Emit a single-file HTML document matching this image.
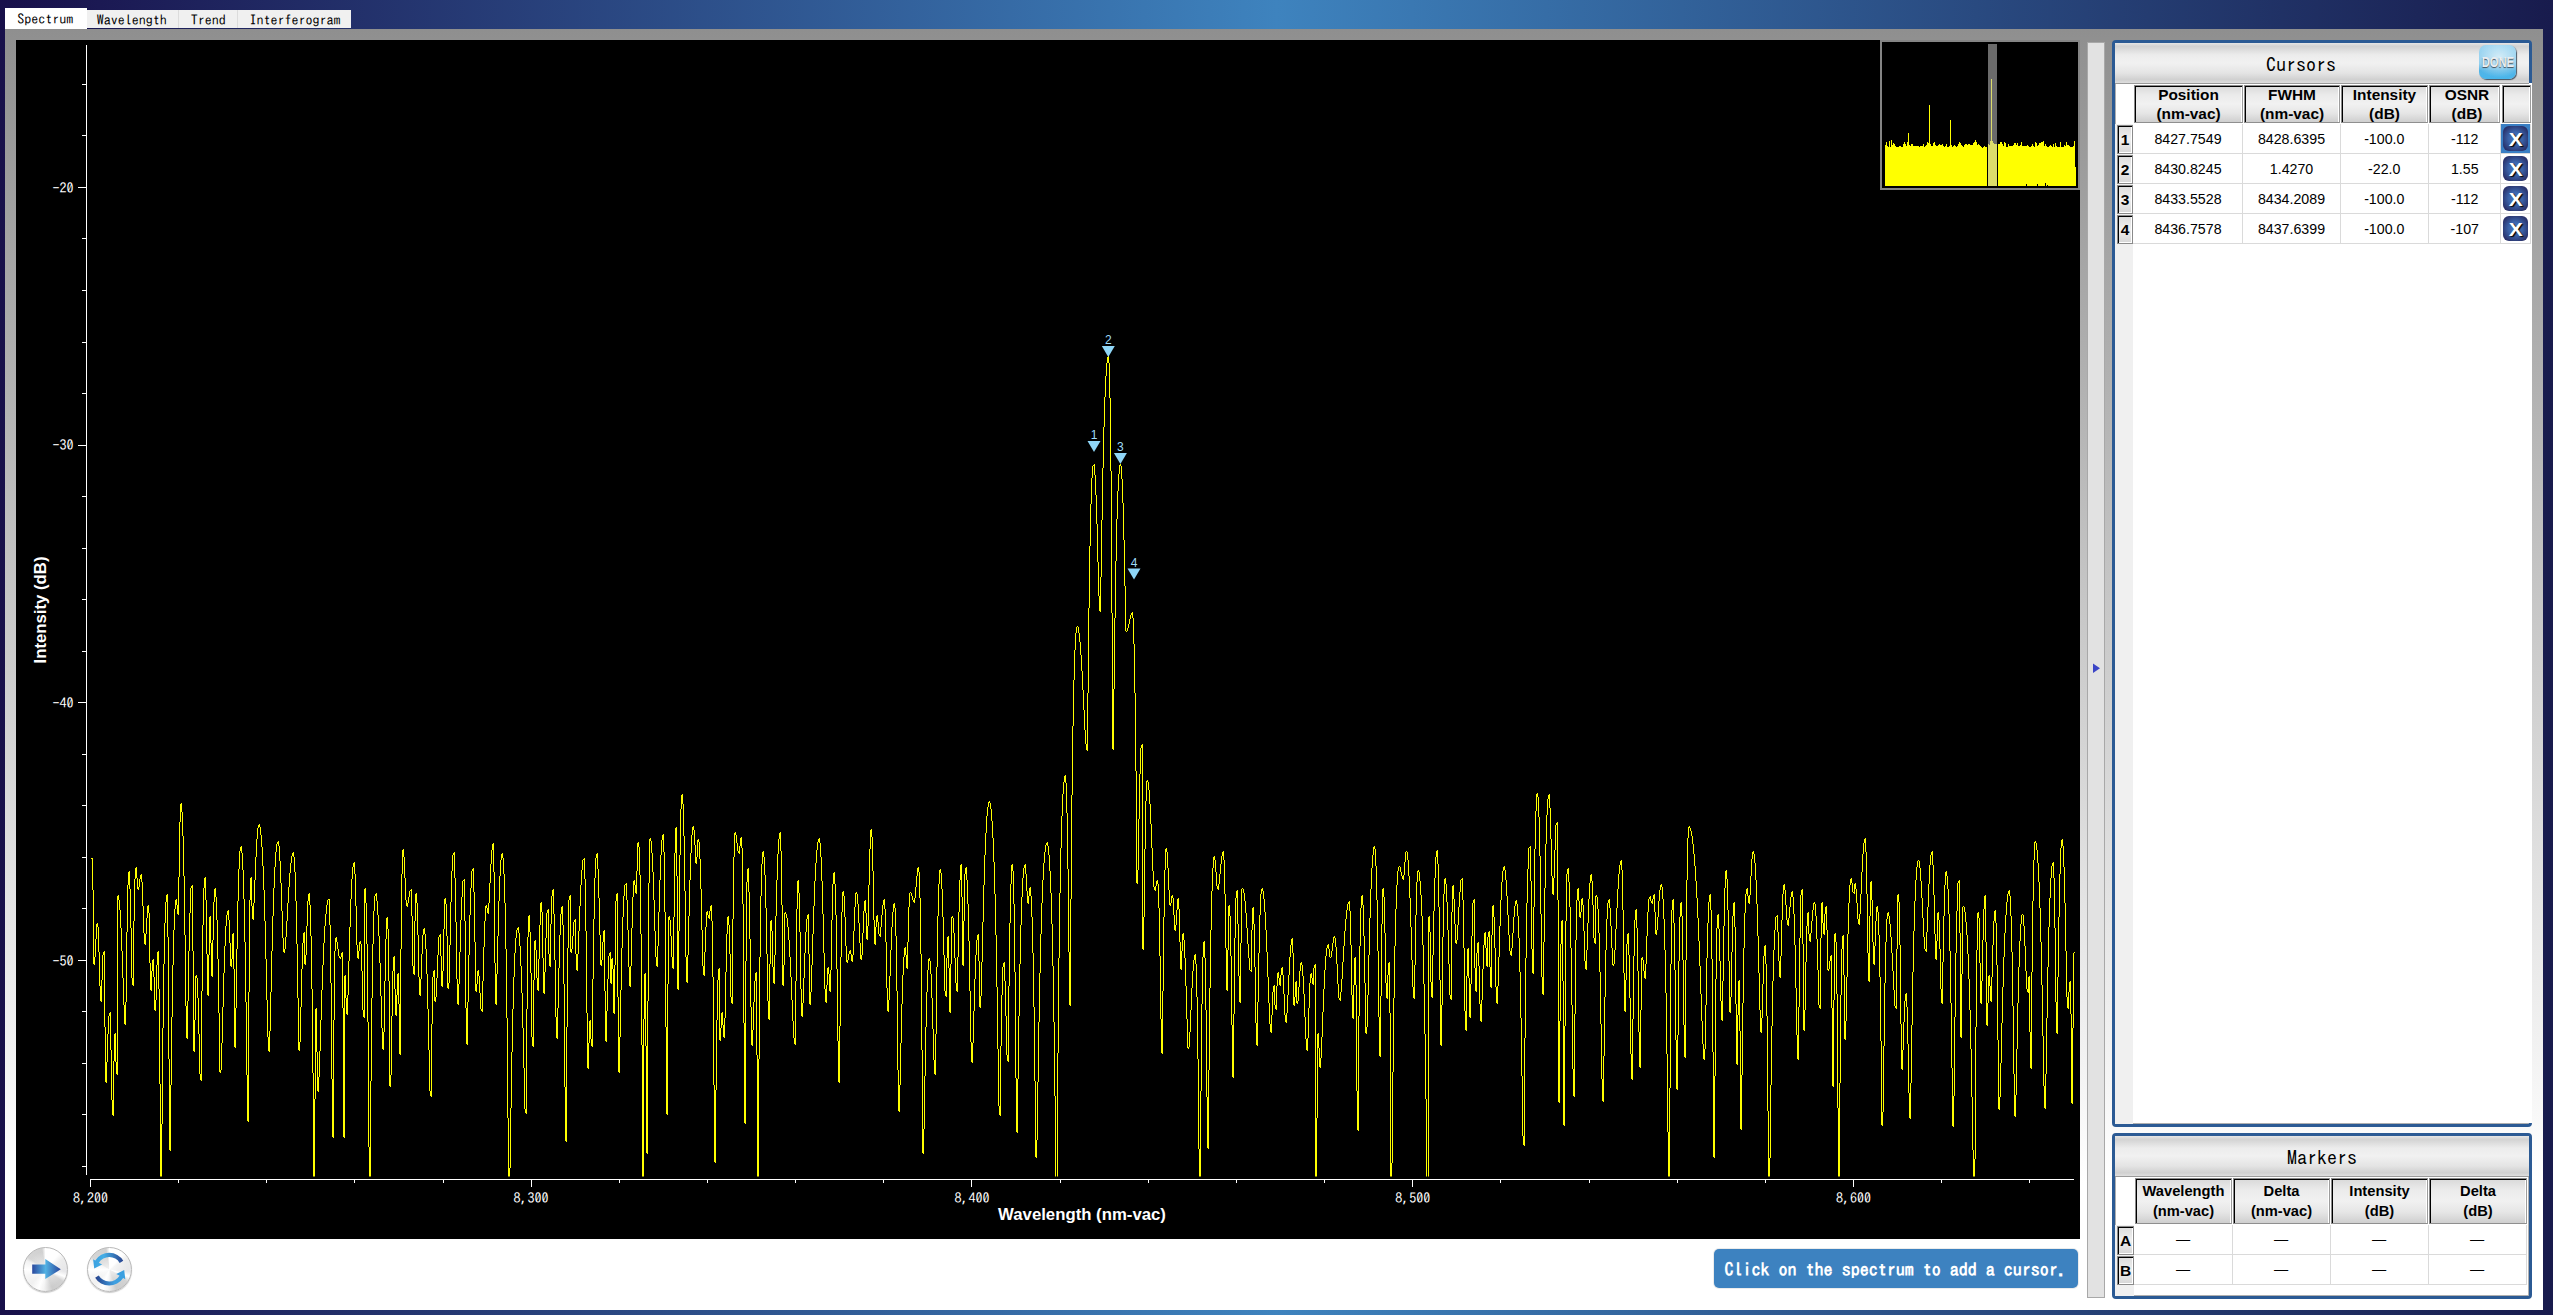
<!DOCTYPE html>
<html lang="en">
<head>
<meta charset="utf-8">
<title>Spectrum</title>
<style>
html,body{margin:0;padding:0}
body{width:2553px;height:1315px;overflow:hidden;position:relative;
  background:linear-gradient(to right,#18104a 0,#3e83be 50%,#181b4d 100%);
  font-family:"Liberation Sans",sans-serif;color:#000}
.abs{position:absolute}
.sim{font-family:"IPAGothic","Liberation Mono",monospace}
/* tabs */
.tab{position:absolute;top:10px;height:18px;background:#f0f0f0;font-size:14px;line-height:20.5px;text-align:center;text-indent:-1.5px;box-sizing:border-box;border-right:1px solid #dcdcdc}
.tab.act{top:8px;height:21px;background:#fff;line-height:23.5px;border-right:0}
/* frame */
#frame{left:5px;top:29px;width:2538px;height:1281px;background:linear-gradient(to bottom,#8f8f8f 0,#ffffff 1155px,#ffffff 100%)}
#plot{left:16px;top:40px;width:2064px;height:1199px;background:#000}
#plot svg{position:absolute;left:0;top:0}
#split{left:2087px;top:42px;width:18px;height:1256px;box-sizing:border-box;background:#e2e2e2;border:1px solid #a8a8a8}
/* panels */
.panel{position:absolute;left:2112px;width:420px;box-sizing:border-box;background:#fff;border:3px solid #2b5a94;border-radius:4px;box-shadow:inset 0 0 0 1px rgba(110,110,110,.55)}
.phead{position:absolute;left:0;top:0;height:40px;width:100%;
  background:linear-gradient(to bottom,#e6e6e6 0,#d2d2d2 8%,#ececec 30%,#f1f1f1 50%,#e4e4e4 75%,#d0d0d0 92%,#dedede 100%)}
.ptitle{position:absolute;font-size:20px;line-height:20px;white-space:nowrap}
.hc{position:absolute;box-sizing:border-box;border:1px solid #8a8a8a;border-right-color:#9c9c9c;border-bottom-color:#8f8f8f;
  box-shadow:inset 1px 1px 0 #000, inset -1px 0 0 #fff;
  background:linear-gradient(to bottom,#d9d9d9 0,#ebebeb 25%,#f1f1f1 50%,#e6e6e6 75%,#cfcfcf 100%);
  font-weight:bold;text-align:center;white-space:nowrap}
.rh{position:absolute;box-sizing:border-box;border:1px solid #8a8a8a;box-shadow:inset 1px 1px 0 #000, inset -1px -1px 0 #fff;
  background:linear-gradient(to bottom,#dcdcdc 0,#f0f0f0 50%,#d6d6d6 100%);font-weight:bold;font-size:15.5px;text-align:center}
.cell{position:absolute;text-align:center;font-size:14.2px;white-space:nowrap}
.gl{position:absolute;background:#dadada}
.xb{position:absolute;width:25px;height:25px;border-radius:6px;
  background:radial-gradient(ellipse at 50% 50%,#4a7cc2 0,#3a62a8 40%,#2a336c 80%,#2a2c60 100%);
  color:#fff;font-weight:bold;font-size:17.5px;line-height:28px;text-align:center;text-shadow:1px 1px 1px #000}
.xb span{display:inline-block;transform:scaleX(1.2)}

#done{left:2479px;top:45px;width:37px;height:34px;border-radius:7px;box-sizing:border-box;
  background:radial-gradient(ellipse 70% 60% at 55% 35%,#d3ecf7 0,rgba(211,236,247,0) 100%),linear-gradient(to bottom,#8fd0f0 0,#86c9ec 55%,#52b4e6 75%,#49b6ec 100%);
  box-shadow:1px 1px 1px rgba(20,40,60,.75);
  color:#e9edf0;font-weight:bold;font-size:14px;line-height:35px;text-align:center;letter-spacing:0;
  text-shadow:0 1px 1px rgba(60,70,80,.9)}
#done span{display:inline-block;transform:translateX(-1.4px) scaleX(.8);transform-origin:50% 50%}

.disc{position:absolute;width:45px;height:45px;border-radius:50%;box-sizing:border-box;border:1.5px solid #b9b9b9;
  background:radial-gradient(circle at 50% 50%,rgba(255,255,255,.75) 0,rgba(255,255,255,.3) 30%,rgba(255,255,255,0) 60%),
  conic-gradient(from 0deg,#ffffff 0deg,#ffffff 40deg,#ececec 60deg,#e6e6e8 95deg,#ffffff 110deg,#d2d2d2 125deg,#cccccc 160deg,#f4f4f4 185deg,#ffffff 200deg,#f0f0f0 225deg,#f6f6f6 250deg,#ffffff 270deg,#f2f2f2 295deg,#d6d6d6 305deg,#d0d0d0 350deg,#ffffff 360deg);
  box-shadow:0 1px 1px rgba(120,120,120,.4)}
#msg{left:1714px;top:1249px;width:364px;height:39px;box-sizing:border-box;background:#3d82c0;border-radius:5px;box-shadow:0 0 0 1px #ececec;
  color:#fff;font-weight:bold;font-size:18px;line-height:40px;padding-left:10.5px;white-space:nowrap;letter-spacing:0.01px}
</style>
</head>
<body>
<!-- tabs -->
<div class="tab act sim" style="left:5px;width:82px">Spectrum</div>
<div class="tab sim" style="left:87px;width:92px">Wavelength</div>
<div class="tab sim" style="left:179px;width:59px;text-indent:0.5px">Trend</div>
<div class="tab sim" style="left:238px;width:113px;border-right:0;text-indent:1px">Interferogram</div>

<div id="frame" class="abs"></div>

<div id="plot" class="abs">
<svg width="2064" height="1199" viewBox="16 40 2064 1199">
  <defs><clipPath id="cp"><rect x="88" y="41" width="1990" height="1135.5"/></clipPath></defs>
  <g shape-rendering="crispEdges" fill="none" stroke="#fff" stroke-width="1">
    <path d="M86.5 45V1175"/>
    <path d="M82 84.5H87M82 135.5H87M78 187.5H87M82 238.5H87M82 290.5H87M82 342.5H87M82 393.5H87M78 445.5H87M82 496.5H87M82 548.5H87M82 599.5H87M82 651.5H87M78 702.5H87M82 754.5H87M82 805.5H87M82 857.5H87M82 908.5H87M78 960.5H87M82 1011.5H87M82 1063.5H87M82 1114.5H87M82 1166.5H87"/>
    <path d="M90 1179.5H2074"/>
    <path d="M90.4 1179V1187M178.6 1179V1183M266.7 1179V1183M354.9 1179V1183M443.0 1179V1183M531.1 1179V1187M619.3 1179V1183M707.5 1179V1183M795.6 1179V1183M883.8 1179V1183M971.9 1179V1187M1060.1 1179V1183M1148.2 1179V1183M1236.4 1179V1183M1324.5 1179V1183M1412.7 1179V1187M1500.8 1179V1183M1589.0 1179V1183M1677.1 1179V1183M1765.3 1179V1183M1853.4 1179V1187M1941.6 1179V1183M2029.7 1179V1183"/>
  </g>
  <g class="sim" font-family="IPAGothic,'Liberation Mono',monospace" font-size="14" fill="#fff"><text x="73.5" y="192.8" text-anchor="end">-20</text><text x="73.5" y="450.4" text-anchor="end">-30</text><text x="73.5" y="708.1" text-anchor="end">-40</text><text x="73.5" y="965.7" text-anchor="end">-50</text><text x="90.4" y="1202.5" text-anchor="middle">8,200</text><text x="531.1" y="1202.5" text-anchor="middle">8,300</text><text x="971.9" y="1202.5" text-anchor="middle">8,400</text><text x="1412.7" y="1202.5" text-anchor="middle">8,500</text><text x="1853.4" y="1202.5" text-anchor="middle">8,600</text></g>
  <text x="1082" y="1219.6" text-anchor="middle" font-family="'Liberation Sans',sans-serif" font-weight="bold" font-size="16.75" fill="#fff">Wavelength (nm-vac)</text>
  <text transform="translate(45.5 610) rotate(-90)" text-anchor="middle" font-family="'Liberation Sans',sans-serif" font-weight="bold" font-size="16.75" fill="#fff">Intensity (dB)</text>
  <path clip-path="url(#cp)" shape-rendering="crispEdges" fill="none" stroke="#ffff00" stroke-width="1" d="M91.5 858v1M92.5 858V890M93.5 890V964M94.5 965V957M95.5 957V939M96.5 939V924M97.5 923V927M98.5 927V952M99.5 952V986M100.5 986V1001M101.5 1002V980M102.5 980V955M103.5 955V952M104.5 951V1027M105.5 1027V1082M106.5 1083V1062M107.5 1062V1034M108.5 1034V1016M109.5 1016V1013M110.5 1012V1050M111.5 1050V1100M112.5 1100V1115M113.5 1116V1061M114.5 1061V1034M115.5 1033V1062M116.5 1062V1074M117.5 1075V896M118.5 895V900M119.5 900V910M120.5 910V928M121.5 928V951M122.5 951V978M123.5 978V1005M124.5 1005V1024M125.5 1025V1002M126.5 1002V932M127.5 932V885M128.5 885V872M129.5 871V889M130.5 889V928M131.5 928V978M132.5 978V985M133.5 986V921M134.5 921V879M135.5 879V868M136.5 867V878M137.5 878V889M138.5 890V887M139.5 887V879M140.5 879V875M141.5 874V882M142.5 882V906M143.5 906V933M144.5 933V944M145.5 945V934M146.5 934V918M147.5 918V906M148.5 905V913M149.5 913V963M150.5 963V990M151.5 991V971M152.5 971V960M153.5 959V977M154.5 977V1010M155.5 1011V1000M156.5 1000V965M157.5 965V952M158.5 951V989M159.5 989V1084M160.5 1084V1177M161.5 1178V1124M162.5 1124V1028M163.5 1028V964M164.5 964V923M165.5 923V902M166.5 902V895M167.5 894V937M168.5 937V1059M169.5 1059V1150M170.5 1151V1085M171.5 1085V1017M172.5 1017V965M173.5 965V930M174.5 930V909M175.5 909V900M176.5 899V905M177.5 905V914M178.5 915V877M179.5 877V822M180.5 822V804M181.5 803V812M182.5 812V836M183.5 836V876M184.5 876V935M185.5 935V1006M186.5 1006V1038M187.5 1039V1001M188.5 1001V951M189.5 951V913M190.5 913V888M191.5 888V886M192.5 885V951M193.5 951V1051M194.5 1052V1020M195.5 1020V976M196.5 975V978M197.5 978V998M198.5 998V1034M199.5 1034V1074M200.5 1074V1080M201.5 1081V991M202.5 991V925M203.5 925V888M204.5 888V878M205.5 877V900M206.5 900V954M207.5 954V995M208.5 996V955M209.5 955V917M210.5 916V943M211.5 943V976M212.5 977V940M213.5 940V902M214.5 902V889M215.5 888V897M216.5 897V920M217.5 920V959M218.5 959V1013M219.5 1013V1072M220.5 1073V1070M221.5 1070V1043M222.5 1043V1007M223.5 1007V973M224.5 973V946M225.5 946V926M226.5 926V915M227.5 915V911M228.5 910V920M229.5 920V943M230.5 943V966M231.5 967V959M232.5 959V934M233.5 933V969M234.5 969V1047M235.5 1048V1008M236.5 1008V949M237.5 949V901M238.5 901V869M239.5 869V851M240.5 851V847M241.5 846V853M242.5 853V870M243.5 870V899M244.5 899V942M245.5 942V1002M246.5 1002V1075M247.5 1075V1121M248.5 1122V992M249.5 992V900M250.5 900V878M251.5 877V906M252.5 906V919M253.5 920V903M254.5 903V880M255.5 880V857M256.5 857V839M257.5 839V828M258.5 828V825M259.5 824V827M260.5 827V835M261.5 835V847M262.5 847V866M263.5 866V890M264.5 890V921M265.5 921V959M266.5 959V1000M267.5 1000V1037M268.5 1037V1051M269.5 1052V1031M270.5 1031V992M271.5 992V951M272.5 951V916M273.5 916V888M274.5 888V867M275.5 867V852M276.5 852V844M277.5 844V842M278.5 841V846M279.5 846V861M280.5 861V883M281.5 883V911M282.5 911V938M283.5 938V952M284.5 953V949M285.5 949V937M286.5 937V921M287.5 921V903M288.5 903V887M289.5 887V873M290.5 873V863M291.5 863V856M292.5 856V853M293.5 852V857M294.5 857V872M295.5 872V901M296.5 901V944M297.5 944V998M298.5 998V1050M299.5 1051V1042M300.5 1042V1007M301.5 1007V969M302.5 969V943M303.5 943V933M304.5 932V964M305.5 965V955M306.5 955V926M307.5 926V901M308.5 901V894M309.5 893V905M310.5 905V936M311.5 936V989M312.5 989V1073M313.5 1073V1177M314.5 1178V1099M315.5 1099V1009M316.5 1008V1052M317.5 1052V1091M318.5 1092V1077M319.5 1077V1051M320.5 1051V1020M321.5 1020V990M322.5 990V965M323.5 965V943M324.5 943V926M325.5 926V914M326.5 914V905M327.5 905V900M328.5 899v1M329.5 899V925M330.5 925V983M331.5 983V1079M332.5 1079V1137M333.5 1138V1020M334.5 1020V951M335.5 951V938M336.5 937V942M337.5 942V949M338.5 949V956M339.5 956V958M340.5 959V957M341.5 957V953M342.5 952V1008M343.5 1008V1137M344.5 1138V976M345.5 975V998M346.5 998V1014M347.5 1015V995M348.5 995V961M349.5 961V927M350.5 927V899M351.5 899V879M352.5 879V867M353.5 867V863M354.5 862V874M355.5 874V906M356.5 906V945M357.5 945V958M358.5 959V951M359.5 951V942M360.5 941V944M361.5 944V971M362.5 971V1010M363.5 1010V1017M364.5 1018V889M365.5 888V903M366.5 903V944M367.5 944V1022M368.5 1022V1147M369.5 1147V1177M370.5 1178V1081M371.5 1081V998M372.5 998V944M373.5 944V911M374.5 911V896M375.5 896V894M376.5 893V901M377.5 901V915M378.5 915V936M379.5 936V963M380.5 963V996M381.5 996V1028M382.5 1028V1049M383.5 1050V1032M384.5 1032V981M385.5 981V939M386.5 939V918M387.5 917V929M388.5 929V981M389.5 981V1086M390.5 1087V1075M391.5 1075V1016M392.5 1016V971M393.5 971V957M394.5 956V989M395.5 989V1015M396.5 1016V995M397.5 995V974M398.5 973V1004M399.5 1004V1054M400.5 1055V949M401.5 949V874M402.5 874V850M403.5 849V857M404.5 857V878M405.5 878V900M406.5 900V906M407.5 907V903M408.5 903V897M409.5 897V891M410.5 891V890M411.5 889V916M412.5 916V966M413.5 966V974M414.5 975V921M415.5 921V894M416.5 893V903M417.5 903V935M418.5 935V977M419.5 977V995M420.5 996V979M421.5 979V954M422.5 954V935M423.5 935V929M424.5 928V934M425.5 934V949M426.5 949V974M427.5 974V1009M428.5 1009V1050M429.5 1050V1091M430.5 1091V1096M431.5 1097V1024M432.5 1024V977M433.5 977V971M434.5 970V1001M435.5 1002V997M436.5 997V978M437.5 978V955M438.5 955V937M439.5 937V935M440.5 934V956M441.5 956V986M442.5 987V971M443.5 971V929M444.5 929V899M445.5 898V904M446.5 904V936M447.5 936V988M448.5 989V983M449.5 983V945M450.5 945V902M451.5 902V871M452.5 871V855M453.5 855V853M454.5 852V878M455.5 878V922M456.5 922V979M457.5 979V1004M458.5 1005V984M459.5 984V952M460.5 952V920M461.5 920V897M462.5 897V881M463.5 881V880M464.5 879V921M465.5 921V1008M466.5 1008V1044M467.5 1045V1002M468.5 1002V955M469.5 955V915M470.5 915V888M471.5 888V871M472.5 871V869M473.5 868V892M474.5 892V942M475.5 942V991M476.5 992V984M477.5 984V971M478.5 970V976M479.5 976V993M480.5 993V1009M481.5 1009V1011M482.5 1012V981M483.5 981V947M484.5 947V921M485.5 921V906M486.5 905V908M487.5 908V913M488.5 914V903M489.5 903V883M490.5 883V864M491.5 864V850M492.5 850V844M493.5 843V872M494.5 872V963M495.5 963V1004M496.5 1005V974M497.5 974V936M498.5 936V901M499.5 901V876M500.5 876V860M501.5 860V854M502.5 853V858M503.5 858V874M504.5 874V903M505.5 903V949M506.5 949V1018M507.5 1018V1118M508.5 1118V1177M509.5 1178V1168M510.5 1168V1108M511.5 1108V1052M512.5 1052V1009M513.5 1009V977M514.5 977V953M515.5 953V938M516.5 938V930M517.5 930V928M518.5 927V933M519.5 933V946M520.5 946V966M521.5 966V993M522.5 993V1028M523.5 1028V1068M524.5 1068V1109M525.5 1109V1113M526.5 1114V1009M527.5 1009V937M528.5 937V916M529.5 915V932M530.5 932V973M531.5 973V1037M532.5 1037V1046M533.5 1047V980M534.5 980V941M535.5 940V950M536.5 950V978M537.5 978V990M538.5 991V959M539.5 959V925M540.5 925V903M541.5 902V912M542.5 912V958M543.5 958V993M544.5 994V972M545.5 972V938M546.5 938V913M547.5 913V910M548.5 909V954M549.5 954V966M550.5 967V924M551.5 924V896M552.5 896V890M553.5 889V914M554.5 914V960M555.5 960V1017M556.5 1017V1038M557.5 1039V1008M558.5 1008V968M559.5 968V935M560.5 935V914M561.5 914V907M562.5 906V925M563.5 925V984M564.5 984V1087M565.5 1087V1141M566.5 1142V1027M567.5 1027V948M568.5 948V900M569.5 900V896M570.5 895V952M571.5 953V949M572.5 949V936M573.5 936V922M574.5 922V920M575.5 919V954M576.5 954V970M577.5 971V954M578.5 954V931M579.5 931V906M580.5 906V885M581.5 885V870M582.5 870V860M583.5 860V859M584.5 858V879M585.5 879V931M586.5 931V1013M587.5 1013V1068M588.5 1069V1043M589.5 1043V1021M590.5 1020V1039M591.5 1039V1046M592.5 1047V979M593.5 979V919M594.5 919V878M595.5 878V858M596.5 858V854M597.5 853V869M598.5 869V898M599.5 898V935M600.5 935V965M601.5 966V960M602.5 960V942M603.5 942V931M604.5 930V991M605.5 991V1041M606.5 1042V1011M607.5 1011V979M608.5 979V956M609.5 956V953M610.5 952V983M611.5 984V959M612.5 958V969M613.5 969V1013M614.5 1014V965M615.5 965V901M616.5 901V894M617.5 893V997M618.5 997V1072M619.5 1073V1037M620.5 1037V990M621.5 990V948M622.5 948V917M623.5 917V896M624.5 896V885M625.5 885V884M626.5 883V900M627.5 900V930M628.5 930V967M629.5 967V986M630.5 987V966M631.5 966V928M632.5 928V897M633.5 897V881M634.5 880V885M635.5 885V893M636.5 894V871M637.5 871V843M638.5 842V847M639.5 847V875M640.5 875V934M641.5 934V1045M642.5 1045V1177M643.5 1178V1019M644.5 1019V974M645.5 973V1046M646.5 1046V1153M647.5 1154V1001M648.5 1001V883M649.5 883V839M650.5 838V841M651.5 841V853M652.5 853V872M653.5 872V900M654.5 900V931M655.5 931V957M656.5 957V966M657.5 967V946M658.5 946V912M659.5 912V880M660.5 880V855M661.5 855V840M662.5 840V835M663.5 834V852M664.5 852V912M665.5 912V1027M666.5 1027V1114M667.5 1115V984M668.5 984V917M669.5 916V920M670.5 920V936M671.5 936V957M672.5 957V968M673.5 969V917M674.5 917V853M675.5 853V828M676.5 827V876M677.5 876V989M678.5 990V931M679.5 931V855M680.5 855V809M681.5 809V795M682.5 794V804M683.5 804V836M684.5 836V891M685.5 891V957M686.5 957V982M687.5 983V955M688.5 955V916M689.5 916V880M690.5 880V853M691.5 853V835M692.5 835V827M693.5 826V830M694.5 830V845M695.5 845V863M696.5 864V857M697.5 857V840M698.5 839V842M699.5 842V859M700.5 859V889M701.5 889V930M702.5 930V966M703.5 966V975M704.5 976V952M705.5 952V927M706.5 927V912M707.5 911V915M708.5 915V918M709.5 919V911M710.5 911V906M711.5 905V921M712.5 921V977M713.5 977V1085M714.5 1085V1162M715.5 1163V1090M716.5 1090V1020M717.5 1020V980M718.5 980V969M719.5 968V1040M720.5 1041V1028M721.5 1028V1013M722.5 1012V1025M723.5 1025V1037M724.5 1038V1018M725.5 1018V972M726.5 972V934M727.5 934V917M728.5 916V925M729.5 925V954M730.5 954V997M731.5 997V1003M732.5 1004V919M733.5 919V857M734.5 857V833M735.5 832V835M736.5 835V843M737.5 843V851M738.5 851V853M739.5 854V846M740.5 846V838M741.5 837V848M742.5 848V904M743.5 904V1023M744.5 1023V1123M745.5 1124V961M746.5 961V882M747.5 882V869M748.5 868V892M749.5 892V939M750.5 939V1007M751.5 1007V1045M752.5 1046V1030M753.5 1030V1002M754.5 1002V981M755.5 981V973M756.5 972V1055M757.5 1055V1177M758.5 1178V1059M759.5 1059V957M760.5 957V896M761.5 896V864M762.5 864V852M763.5 851V857M764.5 857V875M765.5 875V908M766.5 908V954M767.5 954V1001M768.5 1001V1019M769.5 1020V964M770.5 964V921M771.5 920V931M772.5 931V967M773.5 967V983M774.5 984V955M775.5 955V916M776.5 916V880M777.5 880V854M778.5 854V839M779.5 839V833M780.5 832V851M781.5 851V905M782.5 905V985M783.5 986V965M784.5 965V913M785.5 912V914M786.5 914V918M787.5 918V927M788.5 927V940M789.5 940V957M790.5 957V977M791.5 977V1000M792.5 1000V1021M793.5 1021V1038M794.5 1038V1044M795.5 1045V981M796.5 981V909M797.5 909V881M798.5 880V893M799.5 893V932M800.5 932V989M801.5 989V1016M802.5 1017V1003M803.5 1003V978M804.5 978V953M805.5 953V932M806.5 932V919M807.5 919V915M808.5 914V954M809.5 954V1004M810.5 1005V992M811.5 992V965M812.5 965V934M813.5 934V906M814.5 906V881M815.5 881V863M816.5 863V850M817.5 850V842M818.5 842V839M819.5 838V843M820.5 843V857M821.5 857V881M822.5 881V914M823.5 914V953M824.5 953V989M825.5 989V1002M826.5 1003V985M827.5 985V968M828.5 967V974M829.5 974V991M830.5 992V970M831.5 970V920M832.5 920V884M833.5 884V873M834.5 872V884M835.5 884V915M836.5 915V969M837.5 969V1041M838.5 1041V1082M839.5 1083V1026M840.5 1026V957M841.5 957V912M842.5 912V892M843.5 891V896M844.5 896V917M845.5 917V946M846.5 946V962M847.5 963V960M848.5 960V954M849.5 954V951M850.5 950V954M851.5 954V961M852.5 962V955M853.5 955V931M854.5 931V907M855.5 907V893M856.5 892V894M857.5 894V904M858.5 904V923M859.5 923V943M860.5 943V959M861.5 960V955M862.5 955V933M863.5 933V911M864.5 911V901M865.5 900V913M866.5 913V939M867.5 940V926M868.5 926V885M869.5 885V849M870.5 849V830M871.5 829V837M872.5 837V871M873.5 871V920M874.5 920V944M875.5 945V927M876.5 927V916M877.5 915V922M878.5 922V934M879.5 934V936M880.5 937V927M881.5 927V915M882.5 915V905M883.5 905V900M884.5 899V909M885.5 909V942M886.5 942V988M887.5 988V1011M888.5 1012V1000M889.5 1000V976M890.5 976V950M891.5 950V927M892.5 927V912M893.5 912V904M894.5 903V908M895.5 908V936M896.5 936V991M897.5 991V1070M898.5 1070V1111M899.5 1112V1085M900.5 1085V1043M901.5 1043V1004M902.5 1004V975M903.5 975V957M904.5 957V948M905.5 947V955M906.5 955V968M907.5 969V942M908.5 942V907M909.5 907V893M910.5 892V893M911.5 893V896M912.5 896V900M913.5 900V902M914.5 903V898M915.5 898V887M916.5 887V876M917.5 876V868M918.5 867V872M919.5 872V898M920.5 898V954M921.5 954V1050M922.5 1050V1153M923.5 1154V1129M924.5 1129V1076M925.5 1076V1027M926.5 1027V992M927.5 992V970M928.5 970V959M929.5 958V961M930.5 961V974M931.5 974V998M932.5 998V1029M933.5 1029V1060M934.5 1060V1074M935.5 1075V1034M936.5 1034V967M937.5 967V916M938.5 916V884M939.5 884V870M940.5 869V873M941.5 873V889M942.5 889V917M943.5 917V955M944.5 955V991M945.5 991V996M946.5 997V958M947.5 958V937M948.5 936V968M949.5 968V1012M950.5 1013V964M951.5 964V917M952.5 916V918M953.5 918V933M954.5 933V958M955.5 958V983M956.5 983V991M957.5 992V957M958.5 957V912M959.5 912V880M960.5 880V865M961.5 864V897M962.5 897V965M963.5 966V921M964.5 921V874M965.5 874V868M966.5 867V880M967.5 880V904M968.5 904V941M969.5 941V991M970.5 991V1042M971.5 1042V1062M972.5 1063V1043M973.5 1043V1011M974.5 1011V979M975.5 979V955M976.5 955V940M977.5 940V935M978.5 934V961M979.5 961V1007M980.5 1008V996M981.5 996V962M982.5 962V922M983.5 922V885M984.5 885V855M985.5 855V833M986.5 833V816M987.5 816V807M988.5 807V802M989.5 801V803M990.5 803V809M991.5 809V821M992.5 821V838M993.5 838V862M994.5 862V894M995.5 894V935M996.5 935V987M997.5 987V1049M998.5 1049V1106M999.5 1106V1115M1000.5 1116V1046M1001.5 1046V995M1002.5 995V967M1003.5 967V963M1004.5 962V981M1005.5 981V1016M1006.5 1016V1055M1007.5 1055V1061M1008.5 1062V986M1009.5 986V923M1010.5 923V884M1011.5 884V865M1012.5 864V871M1013.5 871V904M1014.5 904V972M1015.5 972V1078M1016.5 1078V1132M1017.5 1133V1079M1018.5 1079V1016M1019.5 1016V964M1020.5 964V925M1021.5 925V897M1022.5 897V878M1023.5 878V868M1024.5 868V865M1025.5 864V874M1026.5 874V891M1027.5 891V903M1028.5 904V896M1029.5 896V888M1030.5 887V896M1031.5 896V917M1032.5 917V953M1033.5 953V1007M1034.5 1007V1081M1035.5 1081V1157M1036.5 1158V1140M1037.5 1140V1082M1038.5 1082V1022M1039.5 1022V973M1040.5 973V934M1041.5 934V903M1042.5 903V880M1043.5 880V863M1044.5 863V852M1045.5 852V845M1046.5 845V843M1047.5 842V846M1048.5 846V855M1049.5 855V871M1050.5 871V893M1051.5 893V924M1052.5 924V966M1053.5 966V1022M1054.5 1022V1096M1055.5 1096V1177M1056.5 1177v1M1057.5 1178V1053M1058.5 1053V958M1059.5 958V893M1060.5 893V848M1061.5 848V816M1062.5 816V794M1063.5 794V782M1064.5 782V776M1065.5 775V783M1066.5 783V813M1067.5 813V869M1068.5 869V952M1069.5 952V1005M1070.5 1006V899M1071.5 899V795M1072.5 795V726M1073.5 726V680M1074.5 680V650M1075.5 650V633M1076.5 633V627M1077.5 626V627M1078.5 627V633M1079.5 633V642M1080.5 642V655M1081.5 655V671M1082.5 671V690M1083.5 690V710M1084.5 710V730M1085.5 730V744M1086.5 744V750M1087.5 751V693M1088.5 693V608M1089.5 608V546M1090.5 546V504M1091.5 504V478M1092.5 478V466M1093.5 466V465M1094.5 464V475M1095.5 475V495M1096.5 495V524M1097.5 524V562M1098.5 562V596M1099.5 596V611M1100.5 612V577M1101.5 577V520M1102.5 520V468M1103.5 468V427M1104.5 427V397M1105.5 397V376M1106.5 376V363M1107.5 363V357M1108.5 356V363M1109.5 363V398M1110.5 398V471M1111.5 471V613M1112.5 613V749M1113.5 750V689M1114.5 689V618M1115.5 618V561M1116.5 561V519M1117.5 519V491M1118.5 491V474M1119.5 474V465M1120.5 464V466M1121.5 466V479M1122.5 479V503M1123.5 503V540M1124.5 540V586M1125.5 586V631M1126.5 632V631M1127.5 631V628M1128.5 628V624M1129.5 624V619M1130.5 619V615M1131.5 615V613M1132.5 612V618M1133.5 618V644M1134.5 644V693M1135.5 693V771M1136.5 771V883M1137.5 884V870M1138.5 870V819M1139.5 819V774M1140.5 774V748M1141.5 748V745M1142.5 744V949M1143.5 950V917M1144.5 917V849M1145.5 849V801M1146.5 801V781M1147.5 780V782M1148.5 782V790M1149.5 790V804M1150.5 804V824M1151.5 824V848M1152.5 848V871M1153.5 871V887M1154.5 887V890M1155.5 891V886M1156.5 886V881M1157.5 880V884M1158.5 884V908M1159.5 908V956M1160.5 956V1019M1161.5 1019V1053M1162.5 1054V991M1163.5 991V917M1164.5 917V870M1165.5 870V849M1166.5 848V852M1167.5 852V868M1168.5 868V890M1169.5 890V905M1170.5 906V903M1171.5 903V896M1172.5 895V898M1173.5 898V915M1174.5 915V930M1175.5 931V925M1176.5 925V910M1177.5 910V899M1178.5 898V909M1179.5 909V942M1180.5 942V969M1181.5 970V951M1182.5 951V934M1183.5 933V940M1184.5 940V958M1185.5 958V986M1186.5 986V1019M1187.5 1019V1048M1188.5 1049V1047M1189.5 1047V1032M1190.5 1032V1010M1191.5 1010V988M1192.5 988V971M1193.5 971V960M1194.5 960V955M1195.5 954V964M1196.5 964V997M1197.5 997V1059M1198.5 1059V1149M1199.5 1149V1177M1200.5 1178V1091M1201.5 1091V1004M1202.5 1004V957M1203.5 957V942M1204.5 941V958M1205.5 958V1010M1206.5 1010V1097M1207.5 1097V1148M1208.5 1149V1070M1209.5 1070V988M1210.5 988V930M1211.5 930V891M1212.5 891V868M1213.5 868V857M1214.5 856V860M1215.5 860V872M1216.5 872V886M1217.5 886V889M1218.5 890V884M1219.5 884V874M1220.5 874V864M1221.5 864V856M1222.5 856V852M1223.5 851V860M1224.5 860V894M1225.5 894V948M1226.5 948V990M1227.5 991V950M1228.5 950V906M1229.5 905V916M1230.5 916V956M1231.5 956V1025M1232.5 1025V1077M1233.5 1078V1014M1234.5 1014V938M1235.5 938V898M1236.5 898V891M1237.5 890V924M1238.5 924V976M1239.5 976V1002M1240.5 1003V943M1241.5 943V889M1242.5 888V889M1243.5 889V893M1244.5 893V901M1245.5 901V913M1246.5 913V928M1247.5 928V944M1248.5 944V958M1249.5 958V970M1250.5 970V971M1251.5 972V930M1252.5 930V908M1253.5 907V924M1254.5 924V967M1255.5 967V1023M1256.5 1023V1045M1257.5 1046V1002M1258.5 1002V953M1259.5 953V915M1260.5 915V894M1261.5 894V889M1262.5 888V891M1263.5 891V899M1264.5 899V912M1265.5 912V930M1266.5 930V952M1267.5 952V977M1268.5 977V1003M1269.5 1003V1024M1270.5 1024V1032M1271.5 1033V1015M1272.5 1015V992M1273.5 992V986M1274.5 985V1005M1275.5 1005V1009M1276.5 1010V986M1277.5 986V973M1278.5 972V978M1279.5 978V985M1280.5 986V975M1281.5 975V968M1282.5 967V975M1283.5 975V994M1284.5 994V1015M1285.5 1015V1022M1286.5 1023V1013M1287.5 1013V995M1288.5 995V975M1289.5 975V957M1290.5 957V945M1291.5 945V939M1292.5 938V953M1293.5 953V1005M1294.5 1006V997M1295.5 997V982M1296.5 981V1003M1297.5 1004V1001M1298.5 1001V987M1299.5 987V971M1300.5 971V963M1301.5 962V965M1302.5 965V976M1303.5 976V994M1304.5 994V1017M1305.5 1017V1039M1306.5 1039V1050M1307.5 1051V1038M1308.5 1038V1008M1309.5 1008V983M1310.5 983V974M1311.5 973V978M1312.5 978V984M1313.5 985V968M1314.5 968V965M1315.5 964V1177M1316.5 1178V1118M1317.5 1118V1034M1318.5 1033V1048M1319.5 1048V1067M1320.5 1068V1058M1321.5 1058V1037M1322.5 1037V1012M1323.5 1012V989M1324.5 989V970M1325.5 970V956M1326.5 956V948M1327.5 948V945M1328.5 944V949M1329.5 949V957M1330.5 958V957M1331.5 957V951M1332.5 951V943M1333.5 943V937M1334.5 936V938M1335.5 938V947M1336.5 947V964M1337.5 964V984M1338.5 984V998M1339.5 998V1000M1340.5 1001V992M1341.5 992V979M1342.5 979V962M1343.5 962V946M1344.5 946V931M1345.5 931V919M1346.5 919V910M1347.5 910V904M1348.5 904V902M1349.5 901V911M1350.5 911V945M1351.5 945V995M1352.5 995V1018M1353.5 1019V985M1354.5 985V958M1355.5 957V985M1356.5 985V1091M1357.5 1091V1130M1358.5 1131V1016M1359.5 1016V946M1360.5 946V908M1361.5 908V896M1362.5 895V905M1363.5 905V936M1364.5 936V983M1365.5 983V1033M1366.5 1034V1027M1367.5 1027V995M1368.5 995V955M1369.5 955V918M1370.5 918V889M1371.5 889V868M1372.5 868V855M1373.5 855V847M1374.5 846V849M1375.5 849V866M1376.5 866V900M1377.5 900V951M1378.5 951V1017M1379.5 1017V1056M1380.5 1057V996M1381.5 996V924M1382.5 924V889M1383.5 888V897M1384.5 897V933M1385.5 933V983M1386.5 983V998M1387.5 999V975M1388.5 975V963M1389.5 962V1013M1390.5 1013V1177M1391.5 1178V1163M1392.5 1163V1072M1393.5 1072V998M1394.5 998V946M1395.5 946V909M1396.5 909V885M1397.5 885V871M1398.5 871V867M1399.5 866V867M1400.5 867V872M1401.5 872V876M1402.5 876V879M1403.5 880V875M1404.5 875V862M1405.5 862V852M1406.5 851V852M1407.5 852V860M1408.5 860V876M1409.5 876V898M1410.5 898V927M1411.5 927V960M1412.5 960V987M1413.5 987V998M1414.5 999V965M1415.5 965V915M1416.5 915V882M1417.5 882V871M1418.5 870V872M1419.5 872V881M1420.5 881V895M1421.5 895V916M1422.5 916V945M1423.5 945V984M1424.5 984V1034M1425.5 1034V1099M1426.5 1099V1177M1427.5 1177v1M1428.5 1178V917M1429.5 916V932M1430.5 932V982M1431.5 982V997M1432.5 998V955M1433.5 955V911M1434.5 911V878M1435.5 878V857M1436.5 857V851M1437.5 850V864M1438.5 864V907M1439.5 907V980M1440.5 980V1045M1441.5 1046V1005M1442.5 1005V937M1443.5 937V894M1444.5 894V879M1445.5 878V884M1446.5 884V902M1447.5 902V930M1448.5 930V964M1449.5 964V995M1450.5 995V999M1451.5 1000V912M1452.5 912V886M1453.5 885V899M1454.5 899V924M1455.5 924V943M1456.5 944V940M1457.5 940V925M1458.5 925V907M1459.5 907V892M1460.5 892V880M1461.5 880V879M1462.5 878V900M1463.5 900V948M1464.5 948V1011M1465.5 1011V1030M1466.5 1031V976M1467.5 976V949M1468.5 948V978M1469.5 978V1017M1470.5 1018V984M1471.5 984V936M1472.5 936V903M1473.5 903V900M1474.5 899V968M1475.5 968V991M1476.5 992V953M1477.5 953V943M1478.5 942V966M1479.5 966V1004M1480.5 1004V1021M1481.5 1022V1000M1482.5 1000V969M1483.5 969V945M1484.5 945V933M1485.5 932V948M1486.5 948V966M1487.5 967V937M1488.5 937V932M1489.5 931V967M1490.5 967V987M1491.5 988V935M1492.5 935V906M1493.5 905V917M1494.5 917V948M1495.5 948V987M1496.5 987V1003M1497.5 1004V986M1498.5 986V957M1499.5 957V926M1500.5 926V900M1501.5 900V882M1502.5 882V871M1503.5 871V867M1504.5 866V870M1505.5 870V880M1506.5 880V896M1507.5 896V915M1508.5 915V935M1509.5 935V951M1510.5 951V955M1511.5 956V948M1512.5 948V933M1513.5 933V917M1514.5 917V906M1515.5 906V901M1516.5 900V904M1517.5 904V916M1518.5 916V938M1519.5 938V972M1520.5 972V1018M1521.5 1018V1076M1522.5 1076V1136M1523.5 1136V1145M1524.5 1146V1038M1525.5 1038V958M1526.5 958V903M1527.5 903V869M1528.5 869V848M1529.5 848V847M1530.5 846V881M1531.5 881V949M1532.5 949V973M1533.5 974V907M1534.5 907V849M1535.5 849V811M1536.5 811V794M1537.5 793V797M1538.5 797V817M1539.5 817V856M1540.5 856V914M1541.5 914V977M1542.5 977V994M1543.5 995V942M1544.5 942V888M1545.5 888V844M1546.5 844V815M1547.5 815V799M1548.5 799V795M1549.5 794V808M1550.5 808V839M1551.5 839V876M1552.5 876V894M1553.5 895V878M1554.5 878V850M1555.5 850V825M1556.5 825V823M1557.5 822V900M1558.5 900V1102M1559.5 1103V1021M1560.5 1021V944M1561.5 944V921M1562.5 920V981M1563.5 981V1125M1564.5 1126V1026M1565.5 1026V921M1566.5 921V874M1567.5 874V869M1568.5 868V882M1569.5 882V907M1570.5 907V948M1571.5 948V1005M1572.5 1005V1069M1573.5 1069V1096M1574.5 1097V1014M1575.5 1014V940M1576.5 940V900M1577.5 900V889M1578.5 888V901M1579.5 901V917M1580.5 918V912M1581.5 912V899M1582.5 898V905M1583.5 905V931M1584.5 931V961M1585.5 961V969M1586.5 970V950M1587.5 950V923M1588.5 923V899M1589.5 899V883M1590.5 883V875M1591.5 874V881M1592.5 881V905M1593.5 905V938M1594.5 938V943M1595.5 944V896M1596.5 895V897M1597.5 897V909M1598.5 909V933M1599.5 933V972M1600.5 972V1024M1601.5 1024V1079M1602.5 1079V1101M1603.5 1102V1056M1604.5 1056V997M1605.5 997V950M1606.5 950V919M1607.5 919V903M1608.5 903V900M1609.5 899V908M1610.5 908V926M1611.5 926V948M1612.5 948V965M1613.5 966V964M1614.5 964V950M1615.5 950V929M1616.5 929V908M1617.5 908V889M1618.5 889V874M1619.5 874V865M1620.5 865V861M1621.5 860V870M1622.5 870V910M1623.5 910V973M1624.5 973V1011M1625.5 1012V980M1626.5 980V944M1627.5 944V934M1628.5 933V955M1629.5 955V998M1630.5 998V1054M1631.5 1054V1079M1632.5 1080V1019M1633.5 1019V956M1634.5 956V920M1635.5 920V910M1636.5 909V928M1637.5 928V971M1638.5 971V1032M1639.5 1032V1067M1640.5 1068V1010M1641.5 1010V958M1642.5 957V960M1643.5 960V971M1644.5 971V978M1645.5 979V964M1646.5 964V936M1647.5 936V912M1648.5 912V899M1649.5 899V897M1650.5 896V901M1651.5 901V903M1652.5 904V899M1653.5 899V895M1654.5 894V912M1655.5 912V934M1656.5 935V930M1657.5 930V917M1658.5 917V901M1659.5 901V890M1660.5 890V885M1661.5 884V887M1662.5 887V899M1663.5 899V919M1664.5 919V950M1665.5 950V993M1666.5 993V1054M1667.5 1054V1132M1668.5 1132V1177M1669.5 1178V1088M1670.5 1088V964M1671.5 964V910M1672.5 910V900M1673.5 899V923M1674.5 923V970M1675.5 970V1040M1676.5 1040V1089M1677.5 1090V1035M1678.5 1035V961M1679.5 961V917M1680.5 917V903M1681.5 902V916M1682.5 916V960M1683.5 960V1025M1684.5 1025V1057M1685.5 1058V960M1686.5 960V880M1687.5 880V838M1688.5 838V827M1689.5 826V828M1690.5 828V831M1691.5 831V836M1692.5 836V844M1693.5 844V854M1694.5 854V866M1695.5 866V881M1696.5 881V898M1697.5 898V918M1698.5 918V941M1699.5 941V966M1700.5 966V994M1701.5 994V1021M1702.5 1021V1044M1703.5 1044V1059M1704.5 1060V1049M1705.5 1049V1005M1706.5 1005V958M1707.5 958V923M1708.5 923V902M1709.5 902V895M1710.5 894V910M1711.5 910V959M1712.5 959V1052M1713.5 1052V1157M1714.5 1158V1076M1715.5 1076V979M1716.5 979V928M1717.5 928V915M1718.5 914V929M1719.5 929V961M1720.5 961V1001M1721.5 1001V1020M1722.5 1021V981M1723.5 981V926M1724.5 926V888M1725.5 888V871M1726.5 870V879M1727.5 879V910M1728.5 910V961M1729.5 961V1012M1730.5 1013V997M1731.5 997V952M1732.5 952V916M1733.5 916V903M1734.5 902V927M1735.5 927V1004M1736.5 1004V1064M1737.5 1065V1015M1738.5 1015V981M1739.5 980V1031M1740.5 1031V1129M1741.5 1130V1075M1742.5 1075V1003M1743.5 1003V948M1744.5 948V913M1745.5 913V894M1746.5 894V889M1747.5 888V896M1748.5 896V903M1749.5 904V895M1750.5 895V876M1751.5 876V859M1752.5 859V852M1753.5 851V854M1754.5 854V863M1755.5 863V880M1756.5 880V904M1757.5 904V936M1758.5 936V973M1759.5 973V1010M1760.5 1010V1032M1761.5 1033V1018M1762.5 1018V984M1763.5 984V956M1764.5 956V946M1765.5 945V964M1766.5 964V1016M1767.5 1016V1111M1768.5 1111V1177M1769.5 1178V1158M1770.5 1158V1085M1771.5 1085V1026M1772.5 1026V981M1773.5 981V950M1774.5 950V930M1775.5 930V917M1776.5 917V916M1777.5 915V932M1778.5 932V961M1779.5 961V977M1780.5 978V956M1781.5 956V920M1782.5 920V894M1783.5 894V885M1784.5 884V890M1785.5 890V905M1786.5 905V920M1787.5 920V925M1788.5 926V918M1789.5 918V907M1790.5 907V897M1791.5 897V892M1792.5 891V897M1793.5 897V914M1794.5 914V945M1795.5 945V988M1796.5 988V1035M1797.5 1035V1059M1798.5 1060V1007M1799.5 1007V938M1800.5 938V895M1801.5 895V890M1802.5 889V944M1803.5 944V1030M1804.5 1031V1010M1805.5 1010V962M1806.5 962V926M1807.5 926V913M1808.5 912V934M1809.5 934V941M1810.5 942V933M1811.5 933V921M1812.5 921V910M1813.5 910V903M1814.5 902V904M1815.5 904V916M1816.5 916V939M1817.5 939V970M1818.5 970V1005M1819.5 1005V1008M1820.5 1009V938M1821.5 938V903M1822.5 902V923M1823.5 923V934M1824.5 935V914M1825.5 914V907M1826.5 906V930M1827.5 930V970M1828.5 971V969M1829.5 969V961M1830.5 961V956M1831.5 955V1008M1832.5 1008V1086M1833.5 1087V1000M1834.5 1000V934M1835.5 933V942M1836.5 942V994M1837.5 994V1108M1838.5 1108V1177M1839.5 1178V1083M1840.5 1083V995M1841.5 995V949M1842.5 949V936M1843.5 935V975M1844.5 975V1039M1845.5 1040V1021M1846.5 1021V977M1847.5 977V934M1848.5 934V903M1849.5 903V885M1850.5 885V879M1851.5 878V883M1852.5 883V892M1853.5 892V893M1854.5 894V884M1855.5 883V889M1856.5 889V903M1857.5 903V919M1858.5 919V924M1859.5 925V914M1860.5 914V894M1861.5 894V872M1862.5 872V854M1863.5 854V843M1864.5 843V839M1865.5 838V852M1866.5 852V894M1867.5 894V953M1868.5 953V981M1869.5 982V916M1870.5 916V882M1871.5 881V900M1872.5 900V942M1873.5 942V964M1874.5 965V946M1875.5 946V921M1876.5 921V907M1877.5 906V912M1878.5 912V935M1879.5 935V977M1880.5 977V1041M1881.5 1041V1125M1882.5 1126V1112M1883.5 1112V1046M1884.5 1046V983M1885.5 983V942M1886.5 942V919M1887.5 919V913M1888.5 912V916M1889.5 916V924M1890.5 924V937M1891.5 937V953M1892.5 953V971M1893.5 971V990M1894.5 990V1006M1895.5 1006V1008M1896.5 1009V949M1897.5 949V895M1898.5 894V902M1899.5 902V945M1900.5 945V1024M1901.5 1024V1069M1902.5 1070V1050M1903.5 1050V1022M1904.5 1022V1001M1905.5 1001V994M1906.5 993V1007M1907.5 1007V1044M1908.5 1044V1093M1909.5 1093V1118M1910.5 1119V1083M1911.5 1083V1025M1912.5 1025V972M1913.5 972V931M1914.5 931V901M1915.5 901V880M1916.5 880V867M1917.5 867V861M1918.5 860V861M1919.5 861V868M1920.5 868V881M1921.5 881V898M1922.5 898V918M1923.5 918V937M1924.5 937V949M1925.5 949V951M1926.5 952V932M1927.5 932V907M1928.5 907V884M1929.5 884V865M1930.5 865V855M1931.5 855V852M1932.5 851V865M1933.5 865V895M1934.5 895V934M1935.5 934V959M1936.5 960V941M1937.5 941V913M1938.5 912V920M1939.5 920V949M1940.5 949V989M1941.5 989V1003M1942.5 1004V962M1943.5 962V916M1944.5 916V885M1945.5 885V872M1946.5 871V876M1947.5 876V889M1948.5 889V914M1949.5 914V951M1950.5 951V1003M1951.5 1003V1068M1952.5 1068V1126M1953.5 1127V1096M1954.5 1096V1017M1955.5 1017V953M1956.5 953V911M1957.5 911V883M1958.5 883V881M1959.5 880V933M1960.5 933V1037M1961.5 1038V974M1962.5 974V907M1963.5 906V907M1964.5 907V912M1965.5 912V922M1966.5 922V935M1967.5 935V954M1968.5 954V979M1969.5 979V1010M1970.5 1010V1049M1971.5 1049V1097M1972.5 1097V1150M1973.5 1150V1177M1974.5 1178V1159M1975.5 1159V1027M1976.5 1027V950M1977.5 950V913M1978.5 912V918M1979.5 918V963M1980.5 963V1003M1981.5 1004V981M1982.5 981V940M1983.5 940V909M1984.5 909V896M1985.5 895V942M1986.5 942V1025M1987.5 1026V1003M1988.5 1003V976M1989.5 975V986M1990.5 986V1001M1991.5 1002V977M1992.5 977V945M1993.5 945V921M1994.5 921V911M1995.5 910V923M1996.5 923V965M1997.5 965V1040M1998.5 1040V1109M1999.5 1110V1097M2000.5 1097V1063M2001.5 1063V1023M2002.5 1023V987M2003.5 987V957M2004.5 957V933M2005.5 933V915M2006.5 915V902M2007.5 902V894M2008.5 894V891M2009.5 890V896M2010.5 896V916M2011.5 916V952M2012.5 952V1006M2013.5 1006V1074M2014.5 1074V1116M2015.5 1117V1095M2016.5 1095V1049M2017.5 1049V1003M2018.5 1003V967M2019.5 967V941M2020.5 941V924M2021.5 924V915M2022.5 914V915M2023.5 915V926M2024.5 926V946M2025.5 946V971M2026.5 971V989M2027.5 989V992M2028.5 993V977M2029.5 976V1032M2030.5 1032V1068M2031.5 1069V972M2032.5 972V901M2033.5 901V860M2034.5 860V842M2035.5 841V843M2036.5 843V850M2037.5 850V863M2038.5 863V882M2039.5 882V908M2040.5 908V942M2041.5 942V985M2042.5 985V1036M2043.5 1036V1086M2044.5 1086V1108M2045.5 1109V1074M2046.5 1074V1018M2047.5 1018V967M2048.5 967V927M2049.5 927V898M2050.5 898V878M2051.5 878V866M2052.5 866V863M2053.5 862V878M2054.5 878V928M2055.5 928V1002M2056.5 1002V1033M2057.5 1034V977M2058.5 977V917M2059.5 917V874M2060.5 874V848M2061.5 848V840M2062.5 839V846M2063.5 846V867M2064.5 867V903M2065.5 903V951M2066.5 951V997M2067.5 997V1008M2068.5 1009V992M2069.5 992V982M2070.5 981V1014M2071.5 1014V1103M2072.5 1104V1028M2073.5 1028V953M2074.5 952v1"/>
  <g font-family="'Liberation Sans',sans-serif" font-size="12" fill="#9fdcf8"><path d="M1101.8 346h13l-6.5 11z" fill="#8fd6f7"/><text x="1108.3" y="344" text-anchor="middle">2</text><path d="M1087.5 441h13l-6.5 11z" fill="#8fd6f7"/><text x="1094" y="439" text-anchor="middle">1</text><path d="M1113.9 453h13l-6.5 11z" fill="#8fd6f7"/><text x="1120.4" y="451" text-anchor="middle">3</text><path d="M1127.5 568.5h13l-6.5 11z" fill="#8fd6f7"/><text x="1134" y="566.5" text-anchor="middle">4</text></g>
  <!-- overview -->
  <g shape-rendering="crispEdges">
    <rect x="1881" y="41" width="198" height="148" fill="#000" stroke="#858585" stroke-width="2"/>
    <polygon fill="#ffff00" points="1885,186 1885,145 1886,145 1886,142 1887,142 1887,146 1888,146 1888,147 1889,147 1889,141 1890,141 1890,147 1891,147 1891,140 1892,140 1892,145 1893,145 1893,143 1894,143 1894,144 1895,144 1895,146 1896,146 1896,147 1897,147 1897,147 1898,147 1898,147 1899,147 1899,146 1900,146 1900,146 1901,146 1901,147 1902,147 1902,147 1903,147 1903,144 1904,144 1904,142 1905,142 1905,144 1906,144 1906,146 1907,146 1907,142 1908,142 1908,133 1909,133 1909,145 1910,145 1910,146 1911,146 1911,144 1912,144 1912,144 1913,144 1913,146 1914,146 1914,146 1915,146 1915,146 1916,146 1916,146 1917,146 1917,146 1918,146 1918,146 1919,146 1919,147 1920,147 1920,146 1921,146 1921,146 1922,146 1922,146 1923,146 1923,144 1924,144 1924,147 1925,147 1925,146 1926,146 1926,145 1927,145 1927,142 1928,142 1928,143 1929,143 1929,105 1930,105 1930,144 1931,144 1931,146 1932,146 1932,146 1933,146 1933,143 1934,143 1934,142 1935,142 1935,145 1936,145 1936,146 1937,146 1937,146 1938,146 1938,145 1939,145 1939,144 1940,144 1940,145 1941,145 1941,145 1942,145 1942,144 1943,144 1943,146 1944,146 1944,147 1945,147 1945,146 1946,146 1946,144 1947,144 1947,147 1948,147 1948,147 1949,147 1949,146 1950,146 1950,120 1951,120 1951,145 1952,145 1952,147 1953,147 1953,146 1954,146 1954,145 1955,145 1955,146 1956,146 1956,147 1957,147 1957,146 1958,146 1958,144 1959,144 1959,142 1960,142 1960,143 1961,143 1961,145 1962,145 1962,146 1963,146 1963,147 1964,147 1964,145 1965,145 1965,144 1966,144 1966,144 1967,144 1967,145 1968,145 1968,144 1969,144 1969,144 1970,144 1970,145 1971,145 1971,145 1972,145 1972,145 1973,145 1973,143 1974,143 1974,142 1975,142 1975,140 1976,140 1976,142 1977,142 1977,145 1978,145 1978,144 1979,144 1979,145 1980,145 1980,146 1981,146 1981,147 1982,147 1982,148 1983,148 1983,147 1984,147 1984,146 1985,146 1985,147 1986,147 1986,147 1987,147 1987,148 1988,148 1988,144 1989,144 1989,145 1990,145 1990,141 1991,141 1991,140 1992,140 1992,141 1993,141 1993,143 1994,143 1994,144 1995,144 1995,144 1996,144 1996,144 1997,144 1997,146 1998,146 1998,144 1999,144 1999,144 2000,144 2000,142 2001,142 2001,142 2002,142 2002,144 2003,144 2003,146 2004,146 2004,142 2005,142 2005,143 2006,143 2006,147 2007,147 2007,147 2008,147 2008,144 2009,144 2009,146 2010,146 2010,146 2011,146 2011,146 2012,146 2012,146 2013,146 2013,145 2014,145 2014,143 2015,143 2015,143 2016,143 2016,145 2017,145 2017,143 2018,143 2018,146 2019,146 2019,146 2020,146 2020,145 2021,145 2021,142 2022,142 2022,146 2023,146 2023,146 2024,146 2024,146 2025,146 2025,146 2026,146 2026,146 2027,146 2027,145 2028,145 2028,146 2029,146 2029,147 2030,147 2030,147 2031,147 2031,146 2032,146 2032,144 2033,144 2033,146 2034,146 2034,147 2035,147 2035,142 2036,142 2036,143 2037,143 2037,146 2038,146 2038,145 2039,145 2039,143 2040,143 2040,143 2041,143 2041,142 2042,142 2042,142 2043,142 2043,141 2044,141 2044,146 2045,146 2045,144 2046,144 2046,146 2047,146 2047,147 2048,147 2048,147 2049,147 2049,146 2050,146 2050,145 2051,145 2051,146 2052,146 2052,147 2053,147 2053,144 2054,144 2054,147 2055,147 2055,143 2056,143 2056,146 2057,146 2057,147 2058,147 2058,147 2059,147 2059,147 2060,147 2060,142 2061,142 2061,147 2062,147 2062,147 2063,147 2063,147 2064,147 2064,145 2065,145 2065,146 2066,146 2066,142 2067,142 2067,145 2068,145 2068,145 2069,145 2069,146 2070,146 2070,147 2071,147 2071,147 2072,147 2072,147 2073,147 2073,146 2074,146 2074,141 2075,141 2075,167 2076,167 2076,186"/>
    <path d="M1991.5 79V150" stroke="#ffff00" stroke-width="1"/>
    <rect x="1988" y="44" width="9" height="142" fill="rgb(192,192,192)" fill-opacity="0.557"/>
    <path d="M1987.5 146V186M1997.5 146V186" stroke="#000" stroke-width="1"/>
    <path d="M2026.5 184V186M2037.5 184V186M2045.5 183V186M2047.5 184.5V186" stroke="#000" stroke-width="1"/>
  </g>
</svg>
</div>

<div id="split" class="abs"></div>
<svg class="abs" style="left:2092px;top:663px" width="9" height="11" viewBox="0 0 9 11"><path d="M1 0.5L8 5.2L1 10z" fill="#3b45c6"/></svg>

<div class="panel" style="top:40px;height:1087px"></div>
<div class="abs" style="left:2528px;top:83px;width:4px;height:1040px;background:#fff"></div>
<div class="phead" style="left:2115px;top:43px;width:414px;height:40px"></div>
<div class="abs" style="left:2115px;top:83px;width:414px;height:1px;background:#9a9a9a"></div>
<div class="ptitle sim" style="left:2266px;top:53.5px">Cursors</div>
<div class="abs" id="done"><span>DONE</span></div>
<div class="abs" style="left:2115px;top:124px;width:18px;height:999.5px;background:#f0f0f0"></div>
<div class="hc" style="left:2134px;top:85px;width:109px;height:38px;font-size:15.4px;line-height:18.6px;padding-top:0px">Position<br>(nm-vac)</div>
<div class="hc" style="left:2244px;top:85px;width:96px;height:38px;font-size:15.4px;line-height:18.6px;padding-top:0px">FWHM<br>(nm-vac)</div>
<div class="hc" style="left:2341px;top:85px;width:87px;height:38px;font-size:15.4px;line-height:18.6px;padding-top:0px">Intensity<br>(dB)</div>
<div class="hc" style="left:2429px;top:85px;width:71px;height:38px;font-size:15.4px;line-height:18.6px;padding-top:0px;padding-left:5px">OSNR<br>(dB)</div>
<div class="hc" style="left:2502px;top:85px;width:29px;height:38px;font-size:15.4px;line-height:18.6px;padding-top:0px"><br></div>
<div class="rh" style="left:2117px;top:125px;width:16px;height:29px;line-height:28px">1</div>
<div class="cell" style="left:2133px;top:124px;width:110px;height:30px;line-height:30px">8427.7549</div>
<div class="cell" style="left:2243px;top:124px;width:97px;height:30px;line-height:30px">8428.6395</div>
<div class="cell" style="left:2340px;top:124px;width:88.5px;height:30px;line-height:30px">-100.0</div>
<div class="cell" style="left:2428.5px;top:124px;width:72.5px;height:30px;line-height:30px">-112</div>
<div class="gl" style="left:2133px;top:153px;width:398px;height:1px"></div>
<div class="abs" style="left:2501px;top:124px;width:29px;height:29px;background:#3a7fc4"></div>
<div class="xb" style="left:2503px;top:126px"><span>X</span></div>
<div class="rh" style="left:2117px;top:155px;width:16px;height:29px;line-height:28px">2</div>
<div class="cell" style="left:2133px;top:154px;width:110px;height:30px;line-height:30px">8430.8245</div>
<div class="cell" style="left:2243px;top:154px;width:97px;height:30px;line-height:30px">1.4270</div>
<div class="cell" style="left:2340px;top:154px;width:88.5px;height:30px;line-height:30px">-22.0</div>
<div class="cell" style="left:2428.5px;top:154px;width:72.5px;height:30px;line-height:30px">1.55</div>
<div class="gl" style="left:2133px;top:183px;width:398px;height:1px"></div>
<div class="xb" style="left:2503px;top:156px"><span>X</span></div>
<div class="rh" style="left:2117px;top:185px;width:16px;height:29px;line-height:28px">3</div>
<div class="cell" style="left:2133px;top:184px;width:110px;height:30px;line-height:30px">8433.5528</div>
<div class="cell" style="left:2243px;top:184px;width:97px;height:30px;line-height:30px">8434.2089</div>
<div class="cell" style="left:2340px;top:184px;width:88.5px;height:30px;line-height:30px">-100.0</div>
<div class="cell" style="left:2428.5px;top:184px;width:72.5px;height:30px;line-height:30px">-112</div>
<div class="gl" style="left:2133px;top:213px;width:398px;height:1px"></div>
<div class="xb" style="left:2503px;top:186px"><span>X</span></div>
<div class="rh" style="left:2117px;top:215px;width:16px;height:29px;line-height:28px">4</div>
<div class="cell" style="left:2133px;top:214px;width:110px;height:30px;line-height:30px">8436.7578</div>
<div class="cell" style="left:2243px;top:214px;width:97px;height:30px;line-height:30px">8437.6399</div>
<div class="cell" style="left:2340px;top:214px;width:88.5px;height:30px;line-height:30px">-100.0</div>
<div class="cell" style="left:2428.5px;top:214px;width:72.5px;height:30px;line-height:30px">-107</div>
<div class="gl" style="left:2133px;top:243px;width:398px;height:1px"></div>
<div class="xb" style="left:2503px;top:216px"><span>X</span></div>
<div class="gl" style="left:2242px;top:124px;width:1px;height:120px"></div>
<div class="gl" style="left:2340px;top:124px;width:1px;height:120px"></div>
<div class="gl" style="left:2428px;top:124px;width:1px;height:120px"></div>
<div class="gl" style="left:2500px;top:124px;width:1px;height:120px"></div>
<div class="gl" style="left:2530px;top:124px;width:1px;height:120px"></div>
<div class="panel" style="top:1133px;height:166px"></div>
<div class="phead" style="left:2115px;top:1136px;width:414px;height:40px"></div>
<div class="abs" style="left:2115px;top:1176px;width:414px;height:1px;background:#9a9a9a"></div>
<div class="ptitle sim" style="left:2287px;top:1146.5px">Markers</div>
<div class="abs" style="left:2115px;top:1225px;width:19px;height:71px;background:#f0f0f0"></div>
<div class="hc" style="left:2135px;top:1178px;width:97px;height:46px;font-size:14.7px;line-height:20px;padding-top:2px">Wavelength<br>(nm-vac)</div>
<div class="hc" style="left:2233px;top:1178px;width:97px;height:46px;font-size:14.7px;line-height:20px;padding-top:2px">Delta<br>(nm-vac)</div>
<div class="hc" style="left:2331px;top:1178px;width:97px;height:46px;font-size:14.7px;line-height:20px;padding-top:2px">Intensity<br>(dB)</div>
<div class="hc" style="left:2429px;top:1178px;width:98px;height:46px;font-size:14.7px;line-height:20px;padding-top:2px">Delta<br>(dB)</div>
<div class="rh" style="left:2117px;top:1226px;width:17px;height:29px;line-height:28px">A</div>
<div class="cell" style="left:2134px;top:1225px;width:98px;height:30px;line-height:29px">—</div>
<div class="cell" style="left:2232px;top:1225px;width:98px;height:30px;line-height:29px">—</div>
<div class="cell" style="left:2330px;top:1225px;width:98px;height:30px;line-height:29px">—</div>
<div class="cell" style="left:2428px;top:1225px;width:98px;height:30px;line-height:29px">—</div>
<div class="gl" style="left:2134px;top:1254px;width:393px;height:1px"></div>
<div class="rh" style="left:2117px;top:1256px;width:17px;height:29px;line-height:28px">B</div>
<div class="cell" style="left:2134px;top:1255px;width:98px;height:30px;line-height:29px">—</div>
<div class="cell" style="left:2232px;top:1255px;width:98px;height:30px;line-height:29px">—</div>
<div class="cell" style="left:2330px;top:1255px;width:98px;height:30px;line-height:29px">—</div>
<div class="cell" style="left:2428px;top:1255px;width:98px;height:30px;line-height:29px">—</div>
<div class="gl" style="left:2134px;top:1284px;width:393px;height:1px"></div>
<div class="gl" style="left:2232px;top:1225px;width:1px;height:60px"></div>
<div class="gl" style="left:2330px;top:1225px;width:1px;height:60px"></div>
<div class="gl" style="left:2428px;top:1225px;width:1px;height:60px"></div>
<div class="gl" style="left:2526px;top:1225px;width:1px;height:60px"></div>
<div class="disc" style="left:23px;top:1246.5px"></div>
<div class="disc" style="left:86.7px;top:1246.8px"></div>
<svg class="abs" style="left:16px;top:1240px" width="130" height="60" viewBox="16 1240 130 60">
<defs>
<linearGradient id="ga" gradientUnits="userSpaceOnUse" x1="32" y1="0" x2="61" y2="0"><stop offset="0" stop-color="#2a479d"/><stop offset=".47" stop-color="#52b2e3"/><stop offset="1" stop-color="#28439a"/></linearGradient>
<linearGradient id="gu" gradientUnits="userSpaceOnUse" x1="93" y1="0" x2="124" y2="0"><stop offset="0" stop-color="#3aa0e0"/><stop offset=".35" stop-color="#45aee6"/><stop offset="1" stop-color="#273f8c"/></linearGradient>
<linearGradient id="gl" gradientUnits="userSpaceOnUse" x1="94" y1="0" x2="125" y2="0"><stop offset="0" stop-color="#243a86"/><stop offset=".65" stop-color="#3f9fe0"/><stop offset="1" stop-color="#3aa0e0"/></linearGradient>
</defs>
<path d="M32.2 1264.4H45.3V1259L60.8 1269.3L45.3 1279V1273.8H32.2Z" fill="url(#ga)"/>
<path d="M123.26 1260.75A16.4 16.4 0 0 0 95.29 1260.51L93.09 1259.13L94.22 1268.41L102.15 1264.45L98.85 1262.73A12.2 12.2 0 0 1 119.66 1262.92Z" fill="url(#gu)"/>
<path d="M95.14 1277.65A16.4 16.4 0 0 0 123.11 1277.89L125.31 1279.27L124.18 1269.99L116.25 1273.95L119.55 1275.67A12.2 12.2 0 0 1 98.74 1275.48Z" fill="url(#gl)"/>
</svg>
<div class="abs sim" id="msg">Click on the spectrum to add a cursor.</div>
</body>
</html>
